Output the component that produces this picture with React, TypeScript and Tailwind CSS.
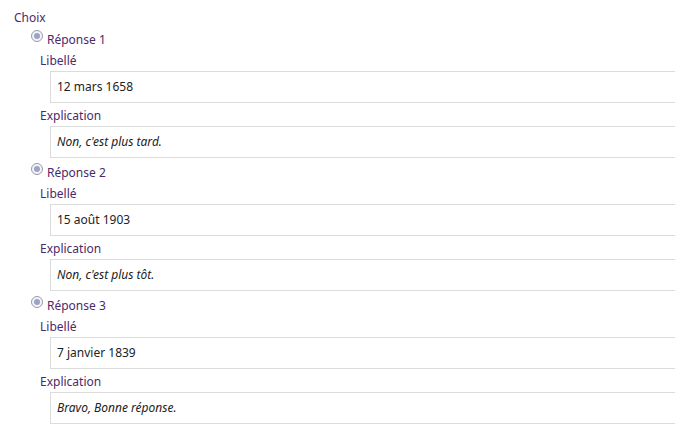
const answers = [
  { title: 'Réponse 1', label: '12 mars 1658', explanation: "Non, c'est plus tard." },
  { title: 'Réponse 2', label: '15 août 1903', explanation: "Non, c'est plus tôt." },
  { title: 'Réponse 3', label: '7 janvier 1839', explanation: 'Bravo, Bonne réponse.' },
];

function Radio() {
  return (
    <span className="mr-[4px] mt-[-6px] inline-flex h-[12px] w-[12px] items-center justify-center rounded-full border border-[#9a9aa8] bg-[#f4f4f8]">
      <span className="h-[6px] w-[6px] rounded-full bg-[#9aa3c8]" />
    </span>
  );
}

function Field({ value, italic }: { value: string; italic?: boolean }) {
  return (
    <div
      className={`ml-[50px] flex h-[32px] items-center border-y border-l border-[#dcdcdc] bg-white pl-[6px] text-[12px] text-[#222] ${
        italic ? 'italic' : ''
      }`}
    >
      {value}
    </div>
  );
}

export default function App() {
  return (
    <div className="min-h-screen bg-white pt-[7px] font-['Noto_Sans',sans-serif] text-[12px] text-[#4b2a6b]">
      <div className="ml-[14px] h-[21px] leading-[21px]">Choix</div>
      {answers.map((a, i) => (
        <div key={a.title} className={i > 0 ? 'mt-[3px]' : ''}>
          <div className="ml-[31px] flex h-[21px] items-center">
            <Radio />
            <span className="mt-[2px]">{a.title}</span>
          </div>
          <div className="ml-[40px] h-[22px] pt-[1px] leading-[21px]">Libellé</div>
          <Field value={a.label} />
          <div className="ml-[40px] h-[23px] pt-[2px] leading-[21px]">Explication</div>
          <Field value={a.explanation} italic />
        </div>
      ))}
    </div>
  );
}
